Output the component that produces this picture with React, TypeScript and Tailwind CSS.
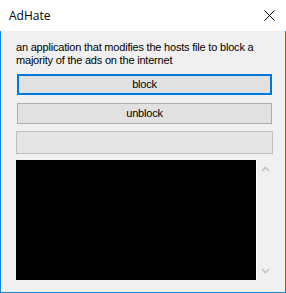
import React from "react";

const App = () => {
  return (
    <div className="w-[286px] h-[293px] flex flex-col bg-white overflow-hidden">
      {/* Title bar */}
      <div className="h-[31px] flex items-center justify-between pl-[9px] pr-[11px] bg-white">
        <span
          className="text-[12px] text-black leading-none mt-[1px]"
          style={{ fontFamily: '"Open Sans", "Noto Sans", sans-serif' }}
        >
          AdHate
        </span>
        <svg width="11" height="11" viewBox="0 0 11 11">
          <path d="M0.5 0.5 L10.5 10.5 M10.5 0.5 L0.5 10.5" stroke="#000" strokeWidth="1" />
        </svg>
      </div>

      {/* Client area */}
      <div
        className="flex-1 flex flex-col bg-[#f0f0f0] border-x border-b border-[#1883d7] pl-[15px] pr-[12px] pt-[10px] text-[11px] text-black"
        style={{ fontFamily: '"Liberation Sans", Arial, sans-serif' }}
      >
        <p className="leading-[13px] tracking-[-0.2px]">
          an application that modifies the hosts file to block a
          <br />
          majority of the ads on the internet
        </p>

        <button className="mt-[7px] ml-[1px] mr-[1px] h-[21px] bg-[#e1e1e1] border-2 border-[#0078d7] text-[11px] leading-none tracking-[-0.2px]">
          block
        </button>
        <button className="mt-[8px] ml-[1px] mr-[1px] h-[21px] bg-[#e1e1e1] border border-[#adadad] text-[11px] leading-none tracking-[-0.2px]">
          unblock
        </button>
        <div className="mt-[7px] h-[23px] bg-[#e5e5e5] border border-[#bfbfbf]" />

        {/* Output box with scrollbar */}
        <div className="mt-[6px] h-[120px] flex">
          <div className="w-[240px] h-full bg-black" />
          <div className="w-[1px] h-full bg-white" />
          <div className="flex-1 flex flex-col items-center justify-between py-[6px]">
            <svg width="9" height="6" viewBox="0 0 9 6">
              <path d="M1 5 L4.5 1.5 L8 5" stroke="#c2c2c2" strokeWidth="1.6" fill="none" />
            </svg>
            <svg width="9" height="6" viewBox="0 0 9 6">
              <path d="M1 1 L4.5 4.5 L8 1" stroke="#c2c2c2" strokeWidth="1.6" fill="none" />
            </svg>
          </div>
        </div>
      </div>
    </div>
  );
};

export default App;
